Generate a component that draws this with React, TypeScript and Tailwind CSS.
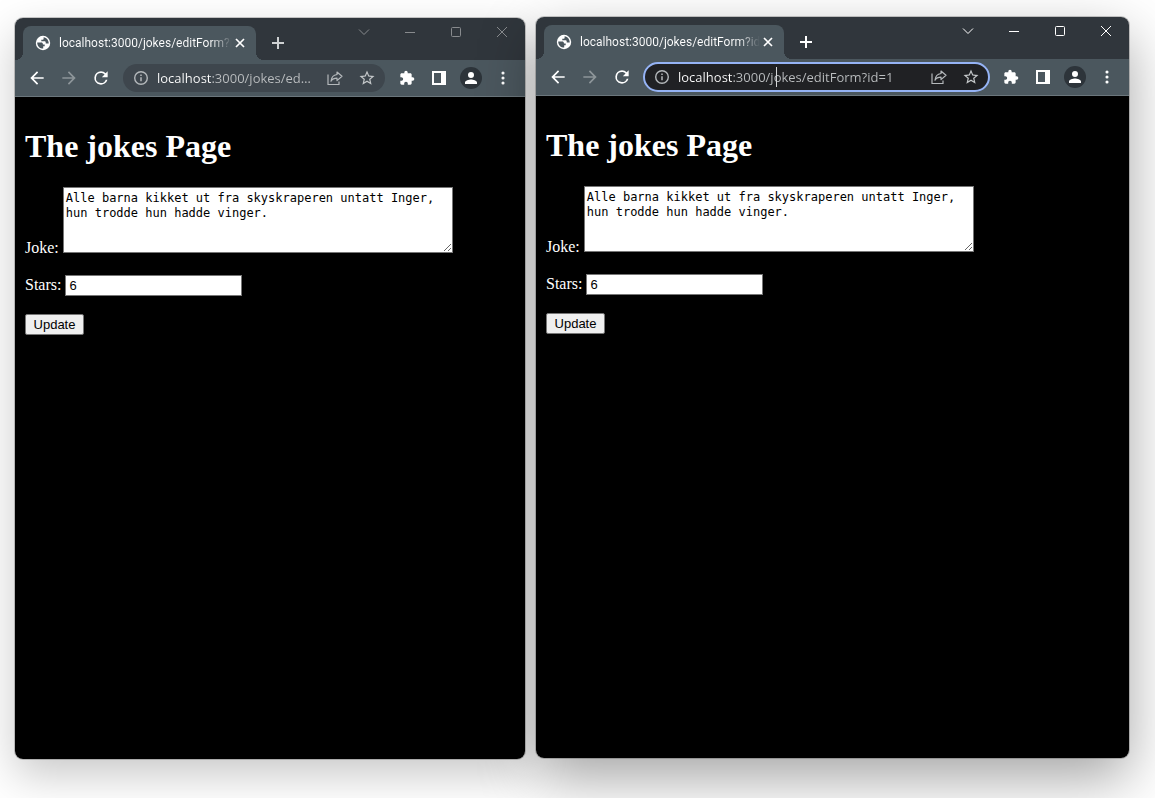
import { useId } from "react";
import type { ReactNode } from "react";

type BrowserWindowProps = {
  active?: boolean;
  className: string;
  tabClass: string;
};

const URL_TEXT = "localhost:3000/jokes/editForm?id=1";

function Icon({ children, size = "size-[18px]" }: { children: ReactNode; size?: string }) {
  return (
    <svg viewBox="0 0 24 24" className={`${size} shrink-0`} fill="currentColor" aria-hidden="true">
      {children}
    </svg>
  );
}

function ToolButton({ label, className = "text-white", children }: { label: string; className?: string; children: ReactNode }) {
  return (
    <button type="button" aria-label={label} className={`flex h-7 w-8 shrink-0 items-center justify-center ${className}`}>
      {children}
    </button>
  );
}

function CaptionButton({ label, d }: { label: string; d: string }) {
  return (
    <button type="button" aria-label={label} className="flex h-7 w-[46px] items-center justify-center">
      <svg viewBox="0 0 12 12" className="size-3" fill="none" stroke="currentColor" aria-hidden="true">
        <path d={d} />
      </svg>
    </button>
  );
}

function TabStrip({ active, tabClass }: { active: boolean; tabClass: string }) {
  return (
    <header className="flex h-[42px] items-end justify-between bg-[#30363c]">
      <div className="flex min-w-0 items-end">
        <span className="size-2 shrink-0 bg-[radial-gradient(circle_at_top_left,#30363c_8px,#4b575e_8px)]" />
        <div className={`flex h-[34px] items-center rounded-t-lg bg-[#4b575e] pr-2 pl-3 ${tabClass}`}>
          <svg viewBox="0 0 16 16" className="size-4 shrink-0" aria-hidden="true">
            <circle cx="8" cy="8" r="7.200" fill="#fff" />
            <path
              fill="#4b575e"
              d="M2.200 7.400h3.900c1.200 0 1.800.6 1.800 1.500v.7h1.800v1.700H8.200v2.300c-3.400 0-6-2.600-6-6.200zM8.600 2.300v1.400c0 .6-.5 1-1.200 1H6.300v1.500h3c1 0 1.400.5 1.400 1.300v1.100h3c.1-3.400-2.100-5.900-5.100-6.300z"
            />
          </svg>
          <span className="ml-2 flex-1 overflow-hidden bg-linear-to-r from-white from-88% to-transparent bg-clip-text font-[Roboto,sans-serif] text-[12px] leading-4 whitespace-nowrap text-transparent">
            {URL_TEXT}
          </span>
          <button type="button" aria-label="Close tab" className="flex size-4 shrink-0 items-center justify-center text-white">
            <svg viewBox="0 0 10 10" className="size-2.5" fill="none" stroke="currentColor" strokeWidth="1.700" aria-hidden="true">
              <path d="M1 1l8 8M9 1l-8 8" />
            </svg>
          </button>
        </div>
        <span className="size-2 shrink-0 bg-[radial-gradient(circle_at_top_right,#30363c_8px,#4b575e_8px)]" />
        <button
          type="button"
          aria-label="New tab"
          className={`flex h-[34px] w-7 items-center justify-center ${active ? "text-white" : "text-[#ced1d3]"}`}
        >
          <svg viewBox="0 0 12 12" className="size-3" fill="none" stroke="currentColor" strokeWidth="2" aria-hidden="true">
            <path d="M6 0v12M0 6h12" />
          </svg>
        </button>
      </div>
      <div className={`flex shrink-0 self-start ${active ? "text-white" : "text-[#888b8e]"}`}>
        <CaptionButton label="Search tabs" d="M1 3.500l5 5 5-5" />
        <CaptionButton label="Minimize" d="M1 6.500h10" />
        <CaptionButton label="Maximize" d="M2.500 1.500h7a1 1 0 0 1 1 1v7a1 1 0 0 1-1 1h-7a1 1 0 0 1-1-1v-7a1 1 0 0 1 1-1z" />
        <CaptionButton label="Close window" d="M1 1l10 10M11 1L1 11" />
      </div>
    </header>
  );
}

function Toolbar({ active }: { active: boolean }) {
  return (
    <div className="flex h-[37px] items-center border-b border-[#6b767c] bg-[#4b575e] px-1.5">
      <ToolButton label="Back">
        <Icon size="size-5">
          <path d="M20 11H7.830l5.590-5.590L12 4l-8 8 8 8 1.410-1.410L7.830 13H20z" />
        </Icon>
      </ToolButton>
      <ToolButton label="Forward" className="text-[#8d9599]">
        <Icon size="size-5">
          <path d="M12 4l-1.410 1.410L16.170 11H4v2h12.170l-5.580 5.590L12 20l8-8z" />
        </Icon>
      </ToolButton>
      <ToolButton label="Reload">
        <Icon size="size-5">
          <path d="M17.650 6.350A7.960 7.960 0 0 0 12 4a8 8 0 1 0 7.730 10h-2.080A6 6 0 1 1 12 6c1.660 0 3.140.69 4.220 1.780L13 11h7V4z" />
        </Icon>
      </ToolButton>
      <div
        className={`mx-1.5 flex h-7 min-w-0 flex-1 items-center rounded-full pl-2.5 ${
          active ? "bg-[#202124] outline-2 -outline-offset-1 outline-[#95b3f5]" : "bg-[#3e464d]"
        }`}
      >
        <span className="flex w-4 shrink-0 justify-center text-[#b4b8bb]">
          <svg viewBox="0 0 16 16" className="size-4" fill="none" stroke="currentColor" strokeWidth="1.400" aria-hidden="true">
            <circle cx="8" cy="8" r="6.300" />
            <path d="M8 7.200v4M8 4.500v1.500" strokeWidth="1.500" />
          </svg>
        </span>
        <div className="relative mr-1.5 ml-2 flex min-w-0 flex-1">
          <input
            type="text"
            aria-label="Address"
            defaultValue={URL_TEXT}
            className="w-full min-w-0 overflow-hidden bg-[linear-gradient(90deg,#fff_54px,#bbbec0_54px)] bg-clip-text font-['Open_Sans',sans-serif] text-[13px] leading-5 text-ellipsis text-transparent outline-none"
          />
          {active && <span className="absolute top-0 left-[98px] h-5 w-px bg-[#d5d7d9]" />}
        </div>
        <ToolButton label="Share" className="text-[#b4b8bb]">
          <svg viewBox="0 0 16 16" className="size-4" fill="none" stroke="currentColor" strokeWidth="1.200" aria-hidden="true">
            <path d="M1 4.500v10h11v-3" />
            <path d="M10 2l5 4.300-5 4.300V8.200c-3 0-4.800.9-6 3C4.300 7.800 6.200 5 10 4.500z" strokeLinejoin="round" />
          </svg>
        </ToolButton>
        <ToolButton label="Bookmark" className="mr-0.5 text-[#c4c7c9]">
          <Icon>
            <path d="M22 9.240l-7.190-.62L12 2 9.190 8.630 2 9.240l5.460 4.730L5.820 21 12 17.270 18.180 21l-1.630-7.030zM12 15.400l-3.760 2.270 1-4.280-3.320-2.880 4.380-.38L12 6.100l1.710 4.040 4.380.38-3.320 2.880 1 4.280z" />
          </Icon>
        </ToolButton>
      </div>
      <ToolButton label="Extensions">
        <Icon size="size-4">
          <path d="M20.500 11H19V7c0-1.100-.9-2-2-2h-4V3.500a2.500 2.500 0 0 0-5 0V5H4c-1.100 0-1.990.9-1.990 2v3.800H3.500c1.490 0 2.700 1.210 2.700 2.700s-1.210 2.700-2.700 2.700H2V20c0 1.100.9 2 2 2h3.800v-1.500c0-1.490 1.210-2.700 2.700-2.700s2.700 1.210 2.700 2.700V22H17c1.100 0 2-.9 2-2v-4h1.500a2.500 2.500 0 0 0 0-5z" />
        </Icon>
      </ToolButton>
      <ToolButton label="Side panel">
        <svg viewBox="0 0 14 14" className="size-3.5" fill="currentColor" fillRule="evenodd" aria-hidden="true">
          <path d="M0 0h14v14H0zM2 2v10h7V2z" />
        </svg>
      </ToolButton>
      <ToolButton label="Profile">
        <span className="flex size-[22px] items-center justify-center rounded-full bg-[#2d343a]">
          <Icon>
            <path d="M12 12a4 4 0 1 0 0-8 4 4 0 0 0 0 8zm0 2c-2.670 0-8 1.340-8 4v2h16v-2c0-2.660-5.330-4-8-4z" />
          </Icon>
        </span>
      </ToolButton>
      <ToolButton label="Menu">
        <Icon>
          <circle cx="12" cy="5.300" r="2.100" />
          <circle cx="12" cy="12" r="2.100" />
          <circle cx="12" cy="18.700" r="2.100" />
        </Icon>
      </ToolButton>
    </div>
  );
}

function JokeForm() {
  const id = useId();
  return (
    <main className="flex-1 bg-black px-2.5 pt-8 font-['Liberation_Serif',serif] text-[16px] text-white">
      <h1 className="text-[32px] leading-[35px] font-bold">The jokes Page</h1>
      <form className="mt-[23px] flex flex-col items-start gap-[22px]" onSubmit={(event) => event.preventDefault()}>
        <div className="flex max-w-full items-end gap-1">
          <label htmlFor={`${id}-joke`} className="leading-[10px]">
            Joke:
          </label>
          <textarea
            id={`${id}-joke`}
            defaultValue="Alle barna kikket ut fra skyskraperen untatt Inger, hun trodde hun hadde vinger."
            className="h-[66px] w-[390px] min-w-0 resize border border-[#767676] bg-white px-0.5 pt-[3px] font-['DejaVu_Sans_Mono',monospace] text-[12px] leading-[15px] text-black outline-none"
          />
        </div>
        <div className="flex items-start gap-1">
          <label htmlFor={`${id}-stars`} className="leading-5">
            Stars:
          </label>
          <input
            id={`${id}-stars`}
            type="text"
            defaultValue="6"
            className="h-[21px] w-[177px] border border-[#767676] bg-white px-[3px] font-['Liberation_Sans',sans-serif] text-[13px] text-black outline-none"
          />
        </div>
        <button
          type="submit"
          className="-mt-1 h-[21px] w-[59px] rounded-xs border border-[#767676] bg-[#efefef] font-['Liberation_Sans',sans-serif] text-[13px] leading-4 text-black"
        >
          Update
        </button>
      </form>
    </main>
  );
}

function BrowserWindow({ active = false, className, tabClass }: BrowserWindowProps) {
  return (
    <section className={`flex min-w-0 flex-col overflow-hidden rounded-lg ${className}`}>
      <TabStrip active={active} tabClass={tabClass} />
      <Toolbar active={active} />
      <JokeForm />
    </section>
  );
}

export default function App() {
  return (
    <div className="grid min-h-screen grid-cols-[510fr_593fr] gap-[11px] bg-white pr-[26px] pl-[15px]">
      <BrowserWindow
        className="mt-[18px] mb-[39px] shadow-[0_0_0_1px_rgba(0,0,0,0.2),0_16px_44px_rgba(0,0,0,0.22)]"
        tabClass="w-[233px]"
      />
      <BrowserWindow
        active
        className="mt-[17px] mb-10 shadow-[0_0_0_1px_rgba(0,0,0,0.2),0_20px_56px_rgba(0,0,0,0.36)]"
        tabClass="w-60"
      />
    </div>
  );
}
